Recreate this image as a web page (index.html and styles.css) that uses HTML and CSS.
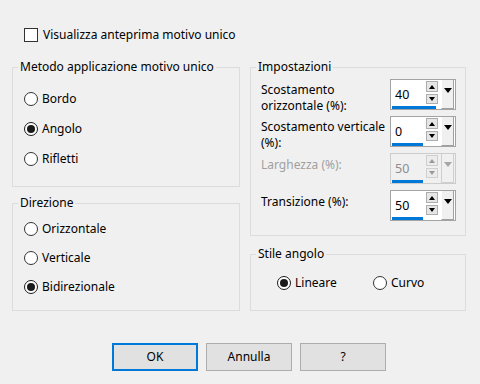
FILE: index.html
```html
<!DOCTYPE html>
<html lang="it">
<head>
<meta charset="utf-8">
<title>Motivo unico</title>
<link rel="stylesheet" href="styles.css">
</head>
<body>
<div class="dialog">
  <div class="check-row"><span class="checkbox"></span><span>Visualizza anteprima motivo unico</span></div>
  <div class="columns">
    <div class="col left">
      <fieldset class="group">
        <legend>Metodo applicazione motivo unico</legend>
        <div class="radio-list g-method">
          <div class="radio-row"><span class="radio"></span><span>Bordo</span></div>
          <div class="radio-row"><span class="radio on"></span><span>Angolo</span></div>
          <div class="radio-row"><span class="radio"></span><span>Rifletti</span></div>
        </div>
      </fieldset>
      <fieldset class="group">
        <legend>Direzione</legend>
        <div class="radio-list tight g-dir">
          <div class="radio-row"><span class="radio"></span><span>Orizzontale</span></div>
          <div class="radio-row"><span class="radio"></span><span>Verticale</span></div>
          <div class="radio-row"><span class="radio on"></span><span>Bidirezionale</span></div>
        </div>
      </fieldset>
    </div>
    <div class="col right">
      <fieldset class="group">
        <legend>Impostazioni</legend>
        <div class="fields g-settings">
          <div class="field">
            <div class="flabel two">Scostamento<br>orizzontale (%):</div>
            <div class="spin">
              <div class="spin-text">40</div>
              <div class="spin-btns"><span class="sb up"></span><span class="sb down"></span></div>
              <div class="dd"><span class="tri"></span></div>
              <span class="bar wide"></span>
            </div>
          </div>
          <div class="field">
            <div class="flabel two">Scostamento verticale<br>(%):</div>
            <div class="spin">
              <div class="spin-text">0</div>
              <div class="spin-btns"><span class="sb up"></span><span class="sb down"></span></div>
              <div class="dd"><span class="tri"></span></div>
              <span class="bar"></span>
            </div>
          </div>
          <div class="field disabled">
            <div class="flabel one">Larghezza (%):</div>
            <div class="spin">
              <div class="spin-text">50</div>
              <div class="spin-btns"><span class="sb up"></span><span class="sb down"></span></div>
              <div class="dd"><span class="tri"></span></div>
              <span class="bar"></span>
            </div>
          </div>
          <div class="field">
            <div class="flabel one">Transizione (%):</div>
            <div class="spin">
              <div class="spin-text">50</div>
              <div class="spin-btns"><span class="sb up"></span><span class="sb down"></span></div>
              <div class="dd"><span class="tri"></span></div>
              <span class="bar"></span>
            </div>
          </div>
        </div>
      </fieldset>
      <fieldset class="group">
        <legend>Stile angolo</legend>
        <div class="radio-inline g-style">
          <div class="radio-row first"><span class="radio on"></span><span>Lineare</span></div>
          <div class="radio-row"><span class="radio"></span><span>Curvo</span></div>
        </div>
      </fieldset>
    </div>
  </div>
  <div class="buttons">
    <div class="btn default">OK</div>
    <div class="btn">Annulla</div>
    <div class="btn">?</div>
  </div>
</div>
</body>
</html>
```

FILE: styles.css
```css
html, body {
  margin: 0;
  padding: 0;
}
body {
  background: #f0f0f0;
  font-family: "Noto Sans", "Open Sans", sans-serif;
  font-size: 12px;
  line-height: 16px;
  color: #000;
  width: 480px;
  height: 384px;
  overflow: hidden;
}
.dialog {
  padding: 27px 0 0 12px;
}
.check-row {
  display: flex;
  align-items: center;
  gap: 5px;
  margin-left: 12px;
  height: 16px;
}
.checkbox {
  width: 14px;
  height: 14px;
  box-sizing: border-box;
  border: 1px solid #333;
  background: #fff;
}
.columns {
  display: grid;
  grid-template-columns: 228px 216px;
  column-gap: 10px;
  margin-top: 16px;
  align-items: start;
}
.col {
  display: flex;
  flex-direction: column;
}
.left { gap: 8px; }
.right { gap: 10px; }

fieldset.group {
  margin: 0;
  min-width: 0;
  border: 1px solid #dcdcdc;
  padding: 0;
}
fieldset.group legend {
  padding: 0 2px;
  margin-left: 5px;
  line-height: 16px;
}
.g-method { padding: 16px 0 19px 11px; }
.g-dir { padding: 10px 0 15px 11px; }
.g-settings { padding: 4px 9px 14px 10px; }
.g-style { padding: 13px 0 19px 26px; }

.radio-list {
  display: flex;
  flex-direction: column;
  gap: 14px;
}
.radio-list.tight { gap: 13px; }
.radio-row {
  display: flex;
  align-items: center;
  gap: 4px;
  height: 16px;
}
.radio {
  width: 14px;
  height: 14px;
  box-sizing: border-box;
  border: 1px solid #333;
  border-radius: 50%;
  background: #fff;
  display: flex;
  align-items: center;
  justify-content: center;
  flex: none;
}
.radio.on { border: 1.5px solid #1a1a1a; }
.radio.on::after {
  content: "";
  width: 8px;
  height: 8px;
  border-radius: 50%;
  background: #1a1a1a;
}
.radio-inline {
  display: flex;
}
.radio-inline .first { width: 96px; }

.fields {
  display: flex;
  flex-direction: column;
  gap: 6px;
}
.field {
  display: flex;
  height: 31px;
}
.flabel {
  width: 129px;
  white-space: nowrap;
}
.flabel.two { padding-top: 3px; }
.flabel.one { padding-top: 4px; }
.field.disabled .flabel { color: #a0a0a0; }

.spin {
  position: relative;
  width: 66px;
  height: 31px;
  box-sizing: border-box;
  border: 1px solid #a3a3a3;
  background: #fff;
  display: flex;
  padding-right: 1px;
}
.spin-text {
  flex: 1;
  padding-left: 4px;
  display: flex;
  align-items: center;
  font-size: 12.5px;
}
.spin-btns {
  width: 12px;
  display: flex;
  flex-direction: column;
  gap: 2px;
  margin-top: 1px;
  margin-right: 3px;
}
.sb {
  box-sizing: border-box;
  border: 1px solid #adadad;
  background: #e6e6e6;
  display: flex;
  align-items: center;
  justify-content: center;
}
.sb.up { height: 11px; }
.sb.down { height: 10px; }
.sb.up::after {
  content: "";
  border-left: 3px solid transparent;
  border-right: 3px solid transparent;
  border-bottom: 4px solid #000;
}
.sb.down::after {
  content: "";
  border-left: 3px solid transparent;
  border-right: 3px solid transparent;
  border-top: 4px solid #000;
}
.dd {
  width: 13px;
  box-sizing: border-box;
  background: #f0f0f0;
  border-left: 1px solid #fff;
  border-right: 1px solid #a0a0a0;
  border-bottom: 1px solid #a0a0a0;
  display: flex;
  justify-content: center;
  padding-top: 8px;
}
.tri {
  width: 0;
  height: 0;
  border-left: 4px solid transparent;
  border-right: 4px solid transparent;
  border-top: 5px solid #000;
}
.bar {
  position: absolute;
  left: 1px;
  bottom: 0;
  width: 31px;
  height: 3px;
  background: #0078d7;
}
.bar.wide { width: 44px; }

.field.disabled .spin {
  background: #f0f0f0;
  border-color: #cccccc;
  color: #8d8d8d;
}
.field.disabled .sb {
  border-color: #cfcfcf;
  background: #ececec;
}
.field.disabled .sb.up::after { border-bottom-color: #9a9a9a; }
.field.disabled .sb.down::after { border-top-color: #9a9a9a; }
.field.disabled .tri { border-top-color: #a6a6a6; }
.field.disabled .dd { border-color: #cfcfcf; }

.buttons {
  display: flex;
  gap: 8px;
  margin-left: 100px;
  margin-top: 32px;
}
.btn {
  width: 86px;
  height: 28px;
  box-sizing: border-box;
  border: 1px solid #adadad;
  background: #e1e1e1;
  display: flex;
  align-items: center;
  justify-content: center;
}
.btn.default {
  border: 2px solid #0078d7;
}
```
